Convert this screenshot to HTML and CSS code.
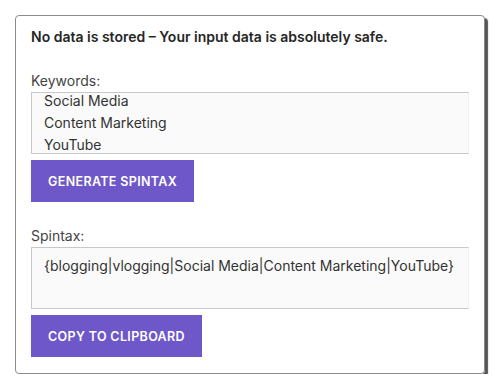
FILE: index.html
```html
<!DOCTYPE html>
<html lang="en">
<head>
    <meta charset="UTF-8">
    <meta name="viewport" content="width=device-width, initial-scale=1.0">
    <title>Spintax Generator</title>
    <link rel="stylesheet" href="styles.css">
</head>
<body>

    <div class="tool-box">
        <p class="notice">No data is stored – Your input data is absolutely safe.</p>

        <label for="keywords" class="field-label">Keywords:</label>
        <textarea id="keywords" class="field" readonly>blogging
vlogging
Social Media
Content Marketing
YouTube</textarea>
        <button class="button" id="generateBtn">Generate Spintax</button>

        <label for="spintax" class="field-label second">Spintax:</label>
        <textarea id="spintax" class="field" readonly>{blogging|vlogging|Social Media|Content Marketing|YouTube}</textarea>
        <button class="button" id="copyBtn">Copy to Clipboard</button>
    </div>

    <script>
        document.getElementById('keywords').scrollTop = 54;
    </script>

</body>
</html>
```
FILE: styles.css
```css
body {
    margin: 0;
    padding: 15px 0 0 15px;
    font-family: Inter, "Noto Sans", sans-serif;
    color: #333;
    background: #fff;
}
.tool-box {
    box-sizing: border-box;
    width: 470px;
    border: 1px solid #8c8c8c;
    border-radius: 4px;
    box-shadow: 3px 3px 1px #555;
    padding: 11px 15px 16px;
}
.notice {
    margin: 0 0 24px;
    font-size: 14px;
    line-height: 20px;
    font-weight: 600;
    color: #262626;
}
.field-label {
    display: block;
    font-size: 14px;
    line-height: 20px;
    color: #444;
    margin-bottom: 1px;
}
.field-label.second {
    margin-top: 24px;
}
.field {
    display: block;
    box-sizing: border-box;
    width: 438px;
    height: 62px;
    margin: 0;
    padding: 7px 12px;
    border: 1px solid #c8c8c8;
    border-right-color: #f0f0f0;
    background: #fafafa;
    font-family: inherit;
    font-size: 14px;
    line-height: 22px;
    color: #333;
    resize: none;
    overflow: hidden;
    outline: none;
}
.button {
    display: block;
    margin-top: 6px;
    height: 42px;
    padding: 0 17px;
    border: none;
    background-color: #6e57c8;
    color: #fff;
    font-family: inherit;
    font-size: 12.5px;
    font-weight: 600;
    letter-spacing: 0.35px;
    text-transform: uppercase;
    cursor: pointer;
}
```
